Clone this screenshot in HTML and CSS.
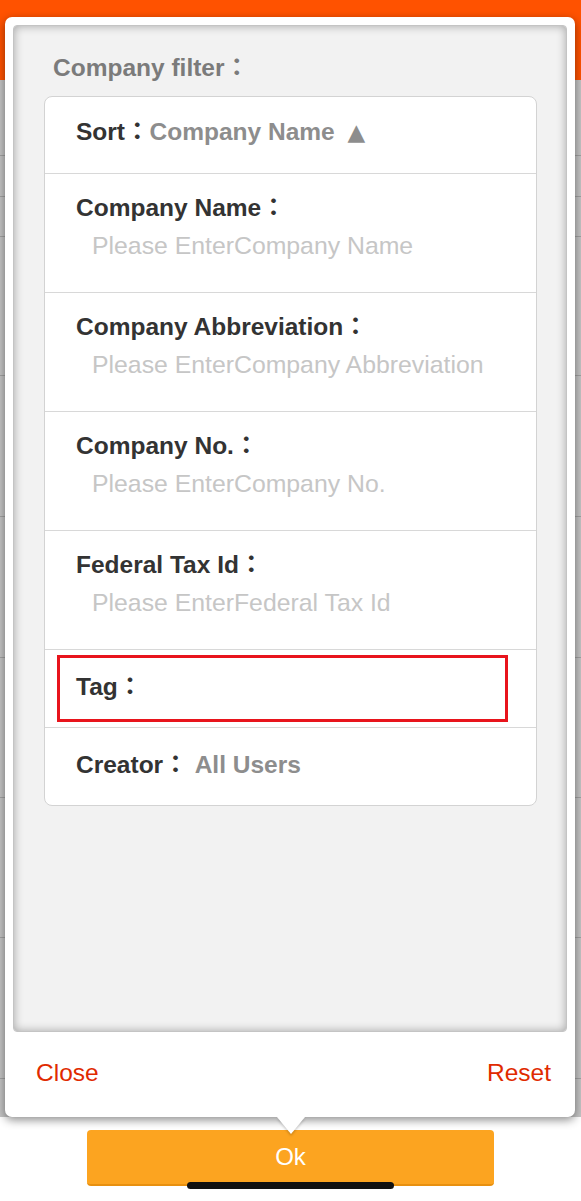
FILE: index.html
```html
<!DOCTYPE html>
<html lang="en">
<head>
<meta charset="utf-8">
<title>Company filter</title>
<link rel="stylesheet" href="styles.css">
</head>
<body>
<div class="page">
  <header class="topbar"></header>
  <div class="list">
    <div class="li"></div><div class="li"></div><div class="li"></div>
    <div class="li"></div><div class="li"></div><div class="li"></div>
    <div class="li"></div><div class="li"></div><div class="li"></div>
    <div class="li last"></div>
  </div>
  <div class="bottom">
    <button class="ok" type="button">Ok</button>
  </div>
  <div class="home"></div>
</div>

<div class="popover">
  <div class="panel">
    <div class="title">Company filter：</div>
    <div class="card">
      <div class="row single"><span class="lbl">Sort：</span><span class="val">Company Name <span class="tri">▲</span></span></div>
      <div class="row field"><div class="lbl">Company Name：</div><div class="ph">Please EnterCompany Name</div></div>
      <div class="row field"><div class="lbl">Company Abbreviation：</div><div class="ph">Please EnterCompany Abbreviation</div></div>
      <div class="row field"><div class="lbl">Company No.：</div><div class="ph">Please EnterCompany No.</div></div>
      <div class="row field"><div class="lbl">Federal Tax Id：</div><div class="ph">Please EnterFederal Tax Id</div></div>
      <div class="row single tag"><span class="lbl">Tag：</span><div class="mark"></div></div>
      <div class="row single creator"><span class="lbl">Creator：</span><span class="val">All Users</span></div>
    </div>
  </div>
  <div class="foot">
    <span class="act">Close</span>
    <span class="act">Reset</span>
  </div>
  <div class="arrow"></div>
</div>
</body>
</html>
```

FILE: styles.css
```css
html, body {
  margin: 0;
  padding: 0;
}
body {
  width: 581px;
  height: 1201px;
  overflow: hidden;
  position: relative;
  font-family: "Liberation Sans", "Noto Sans CJK TC", sans-serif;
  background: #ffffff;
}

/* underlying page */
.page {
  display: flex;
  flex-direction: column;
  height: 1201px;
}
.topbar {
  height: 80px;
  background: #ff5200;
  flex: none;
}
.list {
  height: 1037px;
  flex: none;
  display: grid;
  grid-template-rows: 76px 41px 40px 139px 141px 141px 140px 140px 141px 1fr;
  background: #c4c4c4;
}
.li {
  box-sizing: border-box;
  border-bottom: 1px solid #a2a2a2;
}
.li.last {
  border-bottom: 0;
}
.bottom {
  flex: 1;
  display: flex;
  justify-content: center;
  padding-top: 13px;
  background: #ffffff;
}
.ok {
  width: 407px;
  height: 56px;
  border: 0;
  border-bottom: 2px solid #e8900f;
  border-radius: 4px;
  background: #fca420;
  color: #ffffff;
  font-family: "Liberation Sans", sans-serif;
  font-size: 24px;
  padding: 0;
}
.home {
  position: absolute;
  left: 187px;
  top: 1182px;
  width: 207px;
  height: 7px;
  border-radius: 4px;
  background: #111111;
}

/* popover */
.popover {
  position: absolute;
  left: 5px;
  top: 17px;
  width: 570px;
  height: 1100px;
  box-sizing: border-box;
  padding: 8px 8px 0;
  background: #ffffff;
  border-radius: 7px;
  box-shadow: 0 3px 10px rgba(0, 0, 0, 0.45);
  display: flex;
  flex-direction: column;
}
.panel {
  height: 1007px;
  box-sizing: border-box;
  background: #f2f2f2;
  border: 1px solid #c4c4c4;
  border-radius: 4px;
  box-shadow: inset 0 0 10px rgba(0, 0, 0, 0.32);
  padding: 27px 29px 0 30px;
}
.title {
  font-size: 24.5px;
  line-height: 30px;
  font-weight: bold;
  color: #7b7b7b;
  padding-left: 9px;
}
.card {
  margin-top: 13px;
  background: #ffffff;
  border: 1px solid #d3d3d3;
  border-radius: 8px;
}
.row {
  position: relative;
  box-sizing: border-box;
  border-bottom: 1px solid #d8d8d8;
  padding-left: 31px;
  font-size: 24.5px;
  line-height: 30px;
}
.row:last-child {
  border-bottom: 0;
}
.single {
  height: 77px;
  padding-top: 20px;
}
.tag {
  height: 78px;
  padding-top: 22px;
}
.creator {
  padding-top: 22px;
}
.field {
  height: 119px;
  padding-top: 19px;
}
.lbl {
  font-weight: bold;
  color: #333333;
}
.val {
  font-weight: bold;
  color: #8d8d8d;
}
.tri {
  font-family: "DejaVu Sans", sans-serif;
  font-size: 23px;
  padding-left: 6px;
}
.creator .val {
  margin-left: 7px;
}
.ph {
  margin-top: 8px;
  padding-left: 16px;
  color: #c6c6c6;
  font-size: 24.8px;
}
.mark {
  position: absolute;
  left: 12px;
  top: 5px;
  width: 451px;
  height: 67px;
  box-sizing: border-box;
  border: 3px solid #e8141c;
}

.foot {
  flex: 1;
  display: flex;
  align-items: center;
  justify-content: space-between;
  padding: 0 16px 3px 23px;
}
.act {
  font-size: 24.5px;
  color: #e02a00;
}
.arrow {
  position: absolute;
  left: 272px;
  bottom: -17px;
  width: 0;
  height: 0;
  border-left: 14px solid transparent;
  border-right: 14px solid transparent;
  border-top: 17px solid #ffffff;
  filter: drop-shadow(0 2px 1px rgba(0, 0, 0, 0.18));
}
```
